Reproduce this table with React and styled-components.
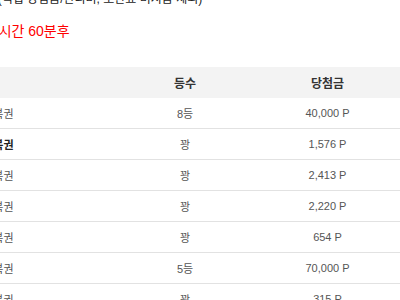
import React from 'react'
import styled, { createGlobalStyle } from 'styled-components'

const GlobalStyle = createGlobalStyle`
  html, body {
    margin: 0;
    padding: 0;
    background: #fff;
    overflow: hidden;
  }
  body {
    font-family: "Liberation Sans", "Noto Sans CJK KR", sans-serif;
  }
`

const Page = styled.div`
  width: 400px;
  height: 300px;
  overflow: hidden;
`

// the screenshot is a crop of a wider page, so the content starts left of the view
const Shift = styled.div`
  margin-left: -${p => p.$offset}px;
  width: 520px;
`

const Note = styled.p`
  margin: -8px 0 0 ${p => p.$indent}px;
  font-size: 12px;
  line-height: 14px;
  color: #222;
  white-space: nowrap;
`

const Alert = styled.p`
  margin: 16px 0 0 ${p => p.$indent}px;
  font-size: 14px;
  line-height: 18px;
  color: #ff0000;
  white-space: nowrap;
`

const Table = styled.div`
  margin-top: 27px;
  display: grid;
  grid-template-columns: 175px 140px 145px 60px;
`

const Row = styled.div`
  display: contents;
`

const Cell = styled.div`
  height: 30px;
  display: flex;
  align-items: center;
  justify-content: ${p => (p.$left ? 'flex-start' : 'center')};
  padding-left: ${p => (!p.$left ? '0' : p.$head ? '8px' : '30px')};
  font-size: ${p => (p.$head ? '12px' : '11px')};
  font-weight: ${p => (p.$head || p.$bold ? 'bold' : 'normal')};
  color: ${p => (p.$head ? '#333' : p.$bold ? '#222' : '#555')};
  background: ${p => (p.$head ? '#f3f3f3' : '#fff')};
  border-bottom: 1px solid ${p => (p.$head ? '#f3f3f3' : '#e2e2e2')};
  white-space: nowrap;
  overflow: hidden;
`

const rows = [
  { name: '연금 복권', rank: '8등', prize: '40,000 P' },
  { name: '연금 복권', rank: '꽝', prize: '1,576 P', bold: true },
  { name: '연금 복권', rank: '꽝', prize: '2,413 P' },
  { name: '연금 복권', rank: '꽝', prize: '2,220 P' },
  { name: '연금 복권', rank: '꽝', prize: '654 P' },
  { name: '연금 복권', rank: '5등', prize: '70,000 P' },
  { name: '연금 복권', rank: '꽝', prize: '315 P' },
]

export default function App() {
  return (
    <Page>
      <GlobalStyle />
      <Shift $offset={60}>
        <Note $indent={44}>* ' (적립 당첨금/관리비, 보관료 미지급 제외)</Note>
        <Alert $indent={29}>구매 시간 60분후</Alert>
        <Table>
          <Row>
            <Cell $head $left>복권명</Cell>
            <Cell $head>등수</Cell>
            <Cell $head>당첨금</Cell>
            <Cell $head />
          </Row>
          {rows.map((r, i) => (
            <Row key={i}>
              <Cell $left $bold={r.bold}>{r.name}</Cell>
              <Cell>{r.rank}</Cell>
              <Cell>{r.prize}</Cell>
              <Cell />
            </Row>
          ))}
        </Table>
      </Shift>
    </Page>
  )
}
